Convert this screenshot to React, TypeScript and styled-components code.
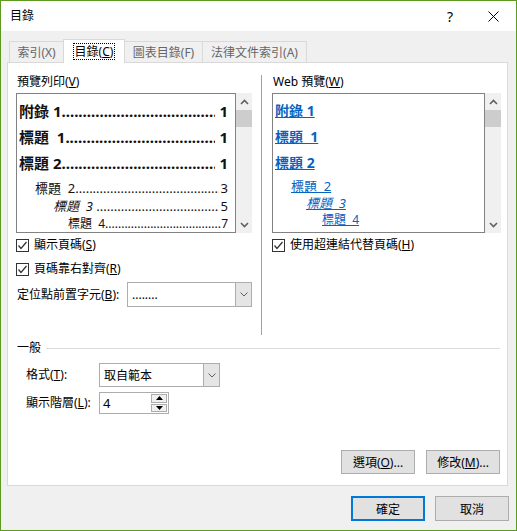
import React from 'react';
import styled, { createGlobalStyle } from 'styled-components';

const GlobalStyle = createGlobalStyle`
  html, body { margin: 0; padding: 0; background: #fff; }
  body {
    font-family: "Noto Sans", "Noto Sans CJK TC", sans-serif;
    font-size: 12px;
    color: #000;
  }
  * { box-sizing: border-box; }
`;

const Window = styled.div`
  width: 517px;
  height: 531px;
  border: 1px solid #5d9a20;
  display: flex;
  flex-direction: column;
  background: #f0f0f0;
`;

const TitleBar = styled.div`
  height: 30px;
  background: #fff;
  display: flex;
  align-items: center;
  padding-left: 9px;
`;

const Title = styled.div`
  flex: 1;
  line-height: 16px;
`;

const TitleButton = styled.div<{ $w: number }>`
  width: ${({ $w }) => $w}px;
  height: 30px;
  display: flex;
  align-items: center;
  justify-content: center;
  font-size: 14px;
`;

const Body = styled.div`
  flex: 1;
  display: flex;
  flex-direction: column;
  padding: 8px 8px 0 6px;
`;

const TabStrip = styled.div`
  display: flex;
  align-items: flex-end;
  height: 23px;
  padding-left: 2px;
`;

const Tab = styled.div<{ $w: number; $active?: boolean }>`
  width: ${({ $w }) => $w}px;
  height: ${({ $active }) => ($active ? 24 : 21)}px;
  margin-bottom: ${({ $active }) => ($active ? -1 : 0)}px;
  margin-left: -1px;
  &:first-child { margin-left: 0; }
  border: 1px solid #d9d9d9;
  border-bottom: none;
  background: ${({ $active }) => ($active ? '#fff' : '#f0f0f0')};
  color: ${({ $active }) => ($active ? '#000' : '#666')};
  display: flex;
  align-items: center;
  justify-content: center;
  position: relative;
  z-index: ${({ $active }) => ($active ? 2 : 1)};
  line-height: 15px;
`;

const FocusRect = styled.span`
  border: 1px dotted #000;
  padding: 0 1px;
`;

const Key = styled.span`
  text-decoration: underline;
`;

const Panel = styled.div`
  height: 424px;
  background: #fff;
  border: 1px solid #d9d9d9;
  display: flex;
  flex-direction: column;
`;

const Columns = styled.div`
  display: flex;
  padding: 11px 0 0 8px;
`;

const Column = styled.div<{ $w: number }>`
  width: ${({ $w }) => $w}px;
  display: flex;
  flex-direction: column;
`;

const Separator = styled.div`
  width: 1px;
  height: 260px;
  margin: 1px 10px 0 9px;
  background: #a0a0a0;
`;

const SectionLabel = styled.div`
  height: 16px;
  line-height: 16px;
  margin-bottom: 3px;
  padding-left: 1px;
`;

const PreviewRow = styled.div`
  display: flex;
  height: 140px;
`;

const PreviewBox = styled.div<{ $w: number }>`
  width: ${({ $w }) => $w}px;
  border: 1px solid #828282;
  padding: 4px 7px 0 2px;
  overflow: hidden;
  background: #fff;
`;

const ScrollBar = styled.div`
  width: 16px;
  background: #f0f0f0;
  display: flex;
  flex-direction: column;
`;

const ScrollArrow = styled.div`
  height: 17px;
  display: flex;
  align-items: center;
  justify-content: center;
`;

const Thumb = styled.div`
  height: 17px;
  background: #cdcdcd;
`;

const Track = styled.div`
  flex: 1;
`;

type Level = 1 | 2 | 3 | 4;

type LevelStyle = { size: number; bold: boolean; italic: boolean; indent: number; h: number; mt: number; gap: number };

const printLevels: Record<Level, LevelStyle> = {
  1: { size: 15, bold: true, italic: false, indent: 0, h: 26, mt: 0, gap: 4 },
  2: { size: 13, bold: false, italic: false, indent: 16, h: 18, mt: 3, gap: 2 },
  3: { size: 13, bold: false, italic: true, indent: 34, h: 18, mt: 0, gap: 2 },
  4: { size: 12, bold: false, italic: false, indent: 49, h: 16, mt: 0, gap: 0 },
};

const webLevels: Record<Level, LevelStyle> = {
  1: { size: 14, bold: true, italic: false, indent: 0, h: 26, mt: 0, gap: 0 },
  2: { size: 13, bold: false, italic: false, indent: 16, h: 18, mt: 1, gap: 0 },
  3: { size: 13, bold: false, italic: true, indent: 31, h: 16, mt: 0, gap: 0 },
  4: { size: 12, bold: false, italic: false, indent: 47, h: 16, mt: 0, gap: 0 },
};

const PrintEntry = styled.div<{ $level: Level }>`
  display: flex;
  align-items: center;
  height: ${({ $level }) => printLevels[$level].h}px;
  margin-top: ${({ $level }) => printLevels[$level].mt}px;
  margin-left: ${({ $level }) => printLevels[$level].indent}px;
  font-size: ${({ $level }) => printLevels[$level].size}px;
  font-weight: ${({ $level }) => (printLevels[$level].bold ? 700 : 400)};
  line-height: 1.25;
  white-space: pre;
  color: #111;
`;

const EntryText = styled.span<{ $italic?: boolean }>`
  font-style: ${({ $italic }) => ($italic ? 'italic' : 'normal')};
`;

const Leader = styled.span`
  flex: 1;
  overflow: hidden;
  white-space: nowrap;
`;

const PageNum = styled.span<{ $gap: number }>`
  padding-left: ${({ $gap }) => $gap}px;
`;

const WebEntry = styled.div<{ $level: Level }>`
  display: flex;
  align-items: center;
  height: ${({ $level }) => webLevels[$level].h}px;
  margin-top: ${({ $level }) => webLevels[$level].mt}px;
  margin-left: ${({ $level }) => webLevels[$level].indent}px;
  font-size: ${({ $level }) => webLevels[$level].size}px;
  font-weight: ${({ $level }) => (webLevels[$level].bold ? 700 : 400)};
  font-style: ${({ $level }) => (webLevels[$level].italic ? 'italic' : 'normal')};
  line-height: 1.25;
  white-space: pre;
`;

const WebLink = styled.span`
  color: #0563c1;
  text-decoration: underline;
`;

const CheckRow = styled.div<{ $mt: number }>`
  display: flex;
  align-items: center;
  gap: 5px;
  height: 16px;
  line-height: 16px;
  margin-top: ${({ $mt }) => $mt}px;
`;

const CheckBox = styled.span`
  width: 13px;
  height: 13px;
  border: 1px solid #333;
  background: #fff;
  display: flex;
  align-items: center;
  justify-content: center;
`;

const LeaderRow = styled.div`
  display: flex;
  align-items: center;
  margin-top: 5px;
`;

const InlineLabel = styled.div<{ $w: number }>`
  width: ${({ $w }) => $w}px;
  line-height: 16px;
  padding-left: 1px;
`;

const Combo = styled.div<{ $w: number; $h: number }>`
  width: ${({ $w }) => $w}px;
  height: ${({ $h }) => $h}px;
  border: 1px solid #adadad;
  background: #fff;
  display: flex;
`;

const ComboText = styled.div`
  flex: 1;
  padding-left: 4px;
  display: flex;
  align-items: center;
`;

const DropButton = styled.div`
  width: 16px;
  background: #e5e5e5;
  border-left: 1px solid #adadad;
  display: flex;
  align-items: center;
  justify-content: center;
`;

const GroupHeader = styled.div`
  display: flex;
  align-items: center;
  height: 16px;
  margin-top: 5px;
  padding: 0 7px 0 9px;
  line-height: 16px;
`;

const GroupLine = styled.div`
  flex: 1;
  height: 1px;
  background: #dcdcdc;
  margin-left: 5px;
`;

const FieldRow = styled.div<{ $mt: number }>`
  display: flex;
  align-items: center;
  padding-left: 17px;
  margin-top: ${({ $mt }) => $mt}px;
`;

const Spin = styled.div`
  width: 70px;
  height: 22px;
  border: 1px solid #adadad;
  background: #fff;
  display: flex;
`;

const SpinValue = styled.div`
  flex: 1;
  padding-left: 3px;
  display: flex;
  align-items: center;
  font-size: 13px;
`;

const SpinButtons = styled.div`
  width: 17px;
  padding: 1px 1px 1px 0;
  display: flex;
  flex-direction: column;
  gap: 1px;
`;

const SpinButton = styled.div`
  flex: 1;
  border: 1px solid #adadad;
  background: #f0f0f0;
  display: flex;
  align-items: center;
  justify-content: center;
`;

const PanelButtons = styled.div`
  margin-top: auto;
  display: flex;
  justify-content: flex-end;
  gap: 11px;
  padding: 0 7px 11px 0;
`;

const Button = styled.button<{ $default?: boolean; $h: number }>`
  width: 74px;
  height: ${({ $h }) => $h}px;
  padding: 0;
  background: #e1e1e1;
  border: ${({ $default }) => ($default ? '2px solid #0078d7' : '1px solid #adadad')};
  font: inherit;
  font-size: 12px;
  color: #000;
`;

const Footer = styled.div`
  display: flex;
  justify-content: flex-end;
  gap: 10px;
  margin: 10px -1px 0 0;
`;

const dots = '.'.repeat(120);

const ChevronUp = () => (
  <svg width="9" height="6" viewBox="0 0 9 6">
    <polyline points="1,5 4.5,1.5 8,5" fill="none" stroke="#606060" strokeWidth="1.6" />
  </svg>
);

const ChevronDown = () => (
  <svg width="9" height="6" viewBox="0 0 9 6">
    <polyline points="1,1 4.5,4.5 8,1" fill="none" stroke="#606060" strokeWidth="1.6" />
  </svg>
);

const ComboChevron = () => (
  <svg width="8" height="5" viewBox="0 0 8 5">
    <polyline points="0.5,0.5 4,4 7.5,0.5" fill="none" stroke="#606060" strokeWidth="1" />
  </svg>
);

const Check = () => (
  <svg width="11" height="11" viewBox="0 0 11 11">
    <polyline points="1.5,5.5 4,8.5 9.5,2" fill="none" stroke="#333" strokeWidth="1.3" />
  </svg>
);

const Scroll = () => (
  <ScrollBar>
    <ScrollArrow><ChevronUp /></ScrollArrow>
    <Thumb />
    <Track />
    <ScrollArrow><ChevronDown /></ScrollArrow>
  </ScrollBar>
);

const entries: { text: string; page: string; level: Level }[] = [
  { text: '附錄 1', page: '1', level: 1 },
  { text: '標題  1', page: '1', level: 1 },
  { text: '標題 2', page: '1', level: 1 },
  { text: '標題  2', page: '3', level: 2 },
  { text: '標題  3 ', page: '5', level: 3 },
  { text: '標題  4', page: '7', level: 4 },
];

const App: React.FC = () => {
  return (
    <>
      <GlobalStyle />
      <Window>
        <TitleBar>
          <Title>目錄</Title>
          <TitleButton $w={40}>?</TitleButton>
          <TitleButton $w={46}>
            <svg width="11" height="11" viewBox="0 0 11 11">
              <line x1="0.5" y1="0.5" x2="10.5" y2="10.5" stroke="#000" strokeWidth="1" />
              <line x1="10.5" y1="0.5" x2="0.5" y2="10.5" stroke="#000" strokeWidth="1" />
            </svg>
          </TitleButton>
        </TitleBar>

        <Body>
          <TabStrip>
            <Tab $w={55}>索引(X)</Tab>
            <Tab $w={62} $active>
              <FocusRect>目錄(<Key>C</Key>)</FocusRect>
            </Tab>
            <Tab $w={79}>圖表目錄(F)</Tab>
            <Tab $w={105}>法律文件索引(A)</Tab>
          </TabStrip>

          <Panel>
            <Columns>
              <Column $w={236}>
                <SectionLabel>預覽列印(<Key>V</Key>)</SectionLabel>
                <PreviewRow>
                  <PreviewBox $w={220}>
                    {entries.map((e, i) => (
                      <PrintEntry key={i} $level={e.level}>
                        <EntryText $italic={printLevels[e.level].italic}>{e.text}</EntryText>
                        <Leader>{dots}</Leader>
                        <PageNum $gap={printLevels[e.level].gap}>{e.page}</PageNum>
                      </PrintEntry>
                    ))}
                  </PreviewBox>
                  <Scroll />
                </PreviewRow>
                <CheckRow $mt={4}>
                  <CheckBox><Check /></CheckBox>
                  <span>顯示頁碼(<Key>S</Key>)</span>
                </CheckRow>
                <CheckRow $mt={8}>
                  <CheckBox><Check /></CheckBox>
                  <span>頁碼靠右對齊(<Key>R</Key>)</span>
                </CheckRow>
                <LeaderRow>
                  <InlineLabel $w={111}>定位點前置字元(<Key>B</Key>):</InlineLabel>
                  <Combo $w={125} $h={25}>
                    <ComboText>........</ComboText>
                    <DropButton><ComboChevron /></DropButton>
                  </Combo>
                </LeaderRow>
              </Column>

              <Separator />

              <Column $w={229}>
                <SectionLabel>Web 預覽(<Key>W</Key>)</SectionLabel>
                <PreviewRow>
                  <PreviewBox $w={213}>
                    {entries.map((e, i) => (
                      <WebEntry key={i} $level={e.level}>
                        <WebLink>{e.text.trimEnd()}</WebLink>
                      </WebEntry>
                    ))}
                  </PreviewBox>
                  <Scroll />
                </PreviewRow>
                <CheckRow $mt={4}>
                  <CheckBox><Check /></CheckBox>
                  <span>使用超連結代替頁碼(<Key>H</Key>)</span>
                </CheckRow>
              </Column>
            </Columns>

            <GroupHeader>
              <span>一般</span>
              <GroupLine />
            </GroupHeader>

            <FieldRow $mt={7}>
              <InlineLabel $w={74}>格式(<Key>T</Key>):</InlineLabel>
              <Combo $w={121} $h={24}>
                <ComboText>取自範本</ComboText>
                <DropButton><ComboChevron /></DropButton>
              </Combo>
            </FieldRow>

            <FieldRow $mt={5}>
              <InlineLabel $w={74}>顯示階層(<Key>L</Key>):</InlineLabel>
              <Spin>
                <SpinValue>4</SpinValue>
                <SpinButtons>
                  <SpinButton>
                    <svg width="7" height="4" viewBox="0 0 7 4"><polygon points="0,4 3.5,0 7,4" fill="#000" /></svg>
                  </SpinButton>
                  <SpinButton>
                    <svg width="7" height="4" viewBox="0 0 7 4"><polygon points="0,0 3.5,4 7,0" fill="#000" /></svg>
                  </SpinButton>
                </SpinButtons>
              </Spin>
            </FieldRow>

            <PanelButtons>
              <Button $h={24}>選項(<Key>O</Key>)...</Button>
              <Button $h={24}>修改(<Key>M</Key>)...</Button>
            </PanelButtons>
          </Panel>

          <Footer>
            <Button $h={25} $default>確定</Button>
            <Button $h={25}>取消</Button>
          </Footer>
        </Body>
      </Window>
    </>
  );
};

export default App;
